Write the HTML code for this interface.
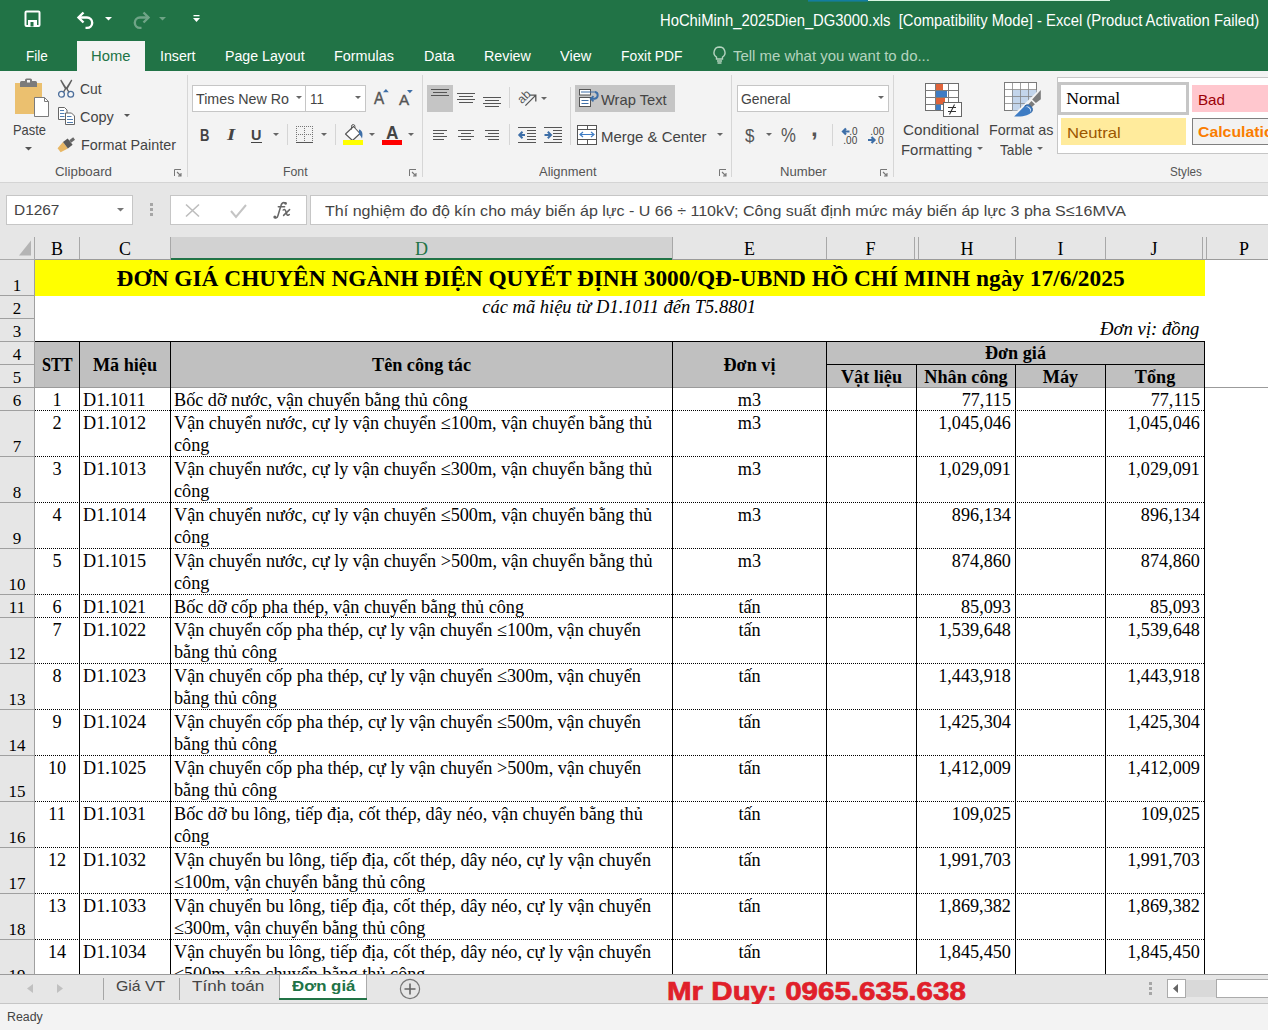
<!DOCTYPE html>
<html><head><meta charset="utf-8">
<style>
*{margin:0;padding:0;box-sizing:border-box}
html,body{width:1268px;height:1030px;overflow:hidden;background:#e6e6e6;position:relative;font-family:"Liberation Sans",sans-serif}
.a{position:absolute;white-space:nowrap}
svg.a{overflow:visible}
</style></head><body>
<div class="a" style="left:0px;top:0px;width:1268px;height:71px;background:#217346"></div>
<div class="a" style="left:808px;top:0px;width:60px;height:1px;background:#137d9f"></div>
<div class="a" style="left:808px;top:1px;width:60px;height:1px;background:#1a7a7a"></div>
<div class="a" style="left:868px;top:0px;width:242px;height:1px;background:#d8f5e2"></div>
<svg class="a" style="left:24px;top:10px" width="18" height="18" viewBox="0 0 18 18"><rect x="1.5" y="1.5" width="14" height="14.5" rx="1" fill="none" stroke="#fff" stroke-width="2"/><rect x="4" y="10" width="9" height="6.5" fill="#fff"/><rect x="6.5" y="12" width="3" height="4.5" fill="#217346"/></svg>
<svg class="a" style="left:76px;top:11px" width="21" height="18" viewBox="0 0 21 18"><path d="M2.5 6.5H11a5.2 5.2 0 0 1 0 10.4H9.5" fill="none" stroke="#fff" stroke-width="2.4"/><path d="M7.5 1.5L2.5 6.5 7.5 11.5" stroke="#fff" stroke-width="2.4" fill="none"/></svg>
<svg class="a" style="left:105px;top:17px" width="8" height="5" viewBox="0 0 8 5"><path d="M0 0h7l-3.5 3.5z" fill="#fff"/></svg>
<svg class="a" style="left:130px;top:11px" width="21" height="18" viewBox="0 0 21 18" opacity="0.35"><path d="M18.5 6.5H10a5.2 5.2 0 0 0 0 10.4h1.5" fill="none" stroke="#fff" stroke-width="2.4"/><path d="M13.5 1.5l5 5-5 5" stroke="#fff" stroke-width="2.4" fill="none"/></svg>
<svg class="a" style="left:159px;top:17px" width="8" height="5" viewBox="0 0 8 5" opacity="0.35"><path d="M0 0h7l-3.5 3.5z" fill="#fff"/></svg>
<svg class="a" style="left:193px;top:15px" width="8" height="8" viewBox="0 0 8 8"><rect x="0.5" y="0" width="6" height="1.3" fill="#fff"/><path d="M0 3h7l-3.5 4z" fill="#fff"/></svg>
<div class="a" style="left:659.70px;top:12.71px;font-size:15.99px;line-height:15.99px;font-family:'Liberation Sans',sans-serif;color:#fff;transform:scaleX(0.9264);transform-origin:0 0">HoChiMinh_2025Dien_DG3000.xls&nbsp; [Compatibility Mode] - Excel (Product Activation Failed)</div>
<div class="a" style="left:77px;top:41px;width:68px;height:31px;background:#f3f3f3"></div>
<div class="a" style="left:25.50px;top:49.02px;font-size:14.68px;line-height:14.68px;font-family:'Liberation Sans',sans-serif;color:#fff;transform:scaleX(0.9224);transform-origin:0 0">File</div>
<div class="a" style="left:90.60px;top:49.02px;font-size:14.68px;line-height:14.68px;font-family:'Liberation Sans',sans-serif;color:#217346;transform:scaleX(1.0078);transform-origin:0 0">Home</div>
<div class="a" style="left:160.40px;top:49.02px;font-size:14.68px;line-height:14.68px;font-family:'Liberation Sans',sans-serif;color:#fff;transform:scaleX(0.9673);transform-origin:0 0">Insert</div>
<div class="a" style="left:225.20px;top:49.02px;font-size:14.68px;line-height:14.68px;font-family:'Liberation Sans',sans-serif;color:#fff;transform:scaleX(0.9672);transform-origin:0 0">Page Layout</div>
<div class="a" style="left:334.00px;top:49.02px;font-size:14.68px;line-height:14.68px;font-family:'Liberation Sans',sans-serif;color:#fff;transform:scaleX(0.9801);transform-origin:0 0">Formulas</div>
<div class="a" style="left:423.50px;top:49.02px;font-size:14.68px;line-height:14.68px;font-family:'Liberation Sans',sans-serif;color:#fff;transform:scaleX(0.9800);transform-origin:0 0">Data</div>
<div class="a" style="left:484.00px;top:49.02px;font-size:14.68px;line-height:14.68px;font-family:'Liberation Sans',sans-serif;color:#fff;transform:scaleX(0.9731);transform-origin:0 0">Review</div>
<div class="a" style="left:560.00px;top:49.02px;font-size:14.68px;line-height:14.68px;font-family:'Liberation Sans',sans-serif;color:#fff;transform:scaleX(0.9934);transform-origin:0 0">View</div>
<div class="a" style="left:621.00px;top:49.02px;font-size:14.68px;line-height:14.68px;font-family:'Liberation Sans',sans-serif;color:#fff;transform:scaleX(0.9435);transform-origin:0 0">Foxit PDF</div>
<div class="a" style="left:733.00px;top:49.02px;font-size:14.68px;line-height:14.68px;font-family:'Liberation Sans',sans-serif;color:#b4d3bf;transform:scaleX(1.0189);transform-origin:0 0">Tell me what you want to do...</div>
<svg class="a" style="left:712px;top:46px" width="15" height="18" viewBox="0 0 15 18"><path d="M7.5 1a5.5 5.5 0 0 0-3 10.1V13h6v-1.9A5.5 5.5 0 0 0 7.5 1z" fill="none" stroke="#b4d3bf" stroke-width="1.4"/><path d="M5 15h5M5.5 17h4" stroke="#b4d3bf" stroke-width="1.3"/></svg>
<div class="a" style="left:0px;top:71px;width:1268px;height:111px;background:#f3f3f3"></div>
<div class="a" style="left:0px;top:182px;width:1268px;height:1px;background:#d4d4d4"></div>
<div class="a" style="left:187px;top:75px;width:1px;height:102px;background:#d6d6d6"></div>
<div class="a" style="left:422px;top:75px;width:1px;height:102px;background:#d6d6d6"></div>
<div class="a" style="left:731px;top:75px;width:1px;height:102px;background:#d6d6d6"></div>
<div class="a" style="left:893px;top:75px;width:1px;height:102px;background:#d6d6d6"></div>
<svg class="a" style="left:13px;top:78px" width="37" height="40" viewBox="0 0 37 40"><rect x="2" y="5" width="27" height="31" fill="#ebc06f"/><path d="M7 9V4.5a1.5 1.5 0 0 1 1.5-1.5H12V2a1.5 1.5 0 0 1 1.5-1.5h4A1.5 1.5 0 0 1 19 2v1h3.5A1.5 1.5 0 0 1 24 4.5V9z" fill="#7b7b7b"/><rect x="14" y="2" width="3" height="2.5" fill="#f3f3f3"/><path d="M21.5 19.5h10l4 4v15h-14z" fill="#fff" stroke="#7b7b7b" stroke-width="1"/><path d="M31.5 19.5v4h4" fill="none" stroke="#7b7b7b" stroke-width="1"/></svg>
<div class="a" style="left:12.70px;top:122.38px;font-size:15.55px;line-height:15.55px;font-family:'Liberation Sans',sans-serif;color:#444;transform:scaleX(0.8289);transform-origin:0 0">Paste</div>
<svg class="a" style="left:25px;top:147px" width="8" height="4" viewBox="0 0 8 4"><path d="M0 0h7l-3.5 3.5z" fill="#555"/></svg>
<svg class="a" style="left:57px;top:79px" width="19" height="19" viewBox="0 0 19 19"><path d="M4.2 0.6L3.2 1.6 8.2 10.6 9.8 9.2z" fill="#5f5f5f"/><path d="M14.3 0.6L15.3 1.6 10.3 10.6 8.7 9.2z" fill="#5f5f5f"/><path d="M9.2 8.6L6.2 13.6M9.2 8.6l3 5" stroke="#5f5f5f" stroke-width="1.3"/><circle cx="4.5" cy="15.3" r="2.9" fill="#fff" fill-opacity="0.4" stroke="#4d6f9c" stroke-width="1.3"/><circle cx="13.7" cy="15.3" r="2.9" fill="#fff" fill-opacity="0.4" stroke="#4d6f9c" stroke-width="1.3"/></svg>
<div class="a" style="left:80.20px;top:81.48px;font-size:15.55px;line-height:15.55px;font-family:'Liberation Sans',sans-serif;color:#444;transform:scaleX(0.8944);transform-origin:0 0">Cut</div>
<svg class="a" style="left:57px;top:106px" width="20" height="20" viewBox="0 0 20 20"><path d="M1.5 1.5h6l2.5 2.5v9.5h-8.5z" fill="#fff" stroke="#666" stroke-width="1"/><path d="M3 4.5h4M3 7.5h4.5M3 10.5h4.5" stroke="#3e6fa8" stroke-width="0.9"/><path d="M8.5 7h6l3 3v8.5h-9z" fill="#fff" stroke="#666" stroke-width="1"/><path d="M10 10.5h4.5M10 13.5h6M10 16.5h6" stroke="#3e6fa8" stroke-width="0.9"/></svg>
<div class="a" style="left:80.20px;top:109.18px;font-size:15.55px;line-height:15.55px;font-family:'Liberation Sans',sans-serif;color:#444;transform:scaleX(0.9300);transform-origin:0 0">Copy</div>
<svg class="a" style="left:124px;top:114px" width="7" height="4" viewBox="0 0 7 4"><path d="M0 0h6l-3 3z" fill="#555"/></svg>
<svg class="a" style="left:57px;top:135px" width="20" height="18" viewBox="0 0 20 18"><g transform="rotate(-38 10 9)"><path d="M0 6.5L8 5v8L0 11.5z" fill="#e8b765"/><rect x="8" y="5" width="6" height="8" fill="#595959"/><rect x="14" y="7.5" width="5" height="3" fill="#6a6a6a"/></g></svg>
<div class="a" style="left:80.80px;top:137.08px;font-size:15.55px;line-height:15.55px;font-family:'Liberation Sans',sans-serif;color:#444;transform:scaleX(0.9231);transform-origin:0 0">Format Painter</div>
<div class="a" style="left:55.40px;top:165.93px;font-size:12.79px;line-height:12.79px;font-family:'Liberation Sans',sans-serif;color:#555;transform:scaleX(1.0412);transform-origin:0 0">Clipboard</div>
<svg class="a" style="left:173.5px;top:169px" width="8" height="8" viewBox="0 0 8 8"><path d="M0.5 7V0.5H7" fill="none" stroke="#777" stroke-width="1"/><path d="M3 3l4 4M7 4v3H4" fill="none" stroke="#777" stroke-width="1.1"/></svg>
<div class="a" style="left:192px;top:85px;width:114px;height:27px;background:#fff;border:1px solid #c6c6c6"></div>
<div class="a" style="left:305px;top:85px;width:61px;height:27px;background:#fff;border:1px solid #c6c6c6"></div>
<div class="a" style="left:196.00px;top:90.98px;font-size:15.55px;line-height:15.55px;font-family:'Liberation Sans',sans-serif;color:#444;transform:scaleX(0.9171);transform-origin:0 0">Times New Ro</div>
<div class="a" style="left:310.30px;top:90.98px;font-size:15.55px;line-height:15.55px;font-family:'Liberation Sans',sans-serif;color:#444;transform:scaleX(0.8532);transform-origin:0 0">11</div>
<svg class="a" style="left:295.5px;top:96px" width="6" height="4" viewBox="0 0 6 4"><path d="M0 0h6l-3.0 3.0 z" fill="#666"/></svg>
<svg class="a" style="left:355px;top:96px" width="6" height="4" viewBox="0 0 6 4"><path d="M0 0h6l-3.0 3.0 z" fill="#666"/></svg>
<div class="a" style="left:374.20px;top:91.33px;font-size:15.84px;line-height:15.84px;font-family:'Liberation Sans',sans-serif;color:#555;transform:scaleX(0.9609);transform-origin:0 0;-webkit-text-stroke:0.4px #555">A</div>
<svg class="a" style="left:382.5px;top:88.5px" width="6" height="4" viewBox="0 0 6 4"><path d="M0 3.2L2.9 0 5.8 3.2z" fill="#3e6fa8"/></svg>
<div class="a" style="left:399.30px;top:92.40px;font-size:15.41px;line-height:15.41px;font-family:'Liberation Sans',sans-serif;color:#555;transform:scaleX(0.9881);transform-origin:0 0;-webkit-text-stroke:0.4px #555">A</div>
<svg class="a" style="left:407px;top:89.5px" width="6" height="4" viewBox="0 0 6 4"><path d="M0 0h5.8L2.9 3.2z" fill="#3e6fa8"/></svg>
<div class="a" style="left:199.80px;top:127.66px;font-size:15.70px;line-height:15.70px;font-family:'Liberation Sans',sans-serif;font-weight:bold;color:#444;transform:scaleX(0.8317);transform-origin:0 0">B</div>
<div class="a" style="left:226.81px;top:127.23px;font-size:16.49px;line-height:16.49px;font-family:'Liberation Serif',serif;font-weight:bold;font-style:italic;color:#444;transform:scaleX(1.2835);transform-origin:0 0">I</div>
<div class="a" style="left:251.30px;top:128.07px;font-size:14.97px;line-height:14.97px;font-family:'Liberation Sans',sans-serif;font-weight:bold;color:#444;transform:scaleX(0.9648);transform-origin:0 0">U</div>
<div class="a" style="left:251px;top:142px;width:11px;height:1px;background:#444"></div>
<svg class="a" style="left:273px;top:133px" width="6" height="4" viewBox="0 0 6 4"><path d="M0 0h6l-3.0 3.0 z" fill="#666"/></svg>
<div class="a" style="left:287px;top:124px;width:1px;height:21px;background:#d5d5d5"></div>
<svg class="a" style="left:296px;top:126px" width="18" height="17" viewBox="0 0 18 17"><path d="M0.5 0v16M16.5 0v16M8.5 0v16M0 0.5h17M0 8.5h17" fill="none" stroke="#777" stroke-width="1" stroke-dasharray="1 1"/><path d="M0 16.5h17" stroke="#555" stroke-width="1"/></svg>
<svg class="a" style="left:321px;top:133px" width="6" height="4" viewBox="0 0 6 4"><path d="M0 0h6l-3.0 3.0 z" fill="#666"/></svg>
<div class="a" style="left:335px;top:124px;width:1px;height:21px;background:#d5d5d5"></div>
<svg class="a" style="left:343px;top:124px" width="21" height="21" viewBox="0 0 21 21"><path d="M2.5 10L10.5 2.5 17 9.5 9.5 16.5z" fill="#fff" stroke="#555" stroke-width="1.1" stroke-linejoin="round"/><path d="M8.5 5.5V2.3a1.7 1.7 0 0 1 3.4 0V4" fill="none" stroke="#555" stroke-width="1"/><path d="M16 5.5c3 0.5 4.3 4 3 9-0.8-1.8-1.8-3.2-3-4.2z" fill="#3e6fa8"/><rect x="0" y="16" width="20" height="5" fill="#ffff00"/></svg>
<svg class="a" style="left:369px;top:133px" width="6" height="4" viewBox="0 0 6 4"><path d="M0 0h6l-3.0 3.0 z" fill="#666"/></svg>
<div class="a" style="left:385.80px;top:123.93px;font-size:18.31px;line-height:18.31px;font-family:'Liberation Sans',sans-serif;font-weight:bold;color:#444;transform:scaleX(0.9404);transform-origin:0 0">A</div>
<div class="a" style="left:382px;top:140px;width:20px;height:5px;background:#ff0000"></div>
<svg class="a" style="left:408px;top:133px" width="6" height="4" viewBox="0 0 6 4"><path d="M0 0h6l-3.0 3.0 z" fill="#666"/></svg>
<div class="a" style="left:283.40px;top:166.13px;font-size:12.79px;line-height:12.79px;font-family:'Liberation Sans',sans-serif;color:#555;transform:scaleX(0.9616);transform-origin:0 0">Font</div>
<svg class="a" style="left:409px;top:169px" width="8" height="8" viewBox="0 0 8 8"><path d="M0.5 7V0.5H7" fill="none" stroke="#777" stroke-width="1"/><path d="M3 3l4 4M7 4v3H4" fill="none" stroke="#777" stroke-width="1.1"/></svg>
<div class="a" style="left:427px;top:85px;width:26px;height:27px;background:#c5c5c5"></div>
<svg class="a" style="left:431px;top:89px" width="30" height="30"><rect x="0" y="0" width="18" height="1" fill="#555"/><rect x="2" y="3" width="14" height="1" fill="#555"/><rect x="0" y="6" width="18" height="1" fill="#555"/></svg>
<svg class="a" style="left:457px;top:93px" width="30" height="30"><rect x="0" y="0" width="18" height="1" fill="#555"/><rect x="2" y="3" width="14" height="1" fill="#555"/><rect x="0" y="6" width="18" height="1" fill="#555"/><rect x="2" y="9" width="14" height="1" fill="#555"/></svg>
<svg class="a" style="left:483px;top:97px" width="30" height="30"><rect x="0" y="0" width="18" height="1" fill="#555"/><rect x="2" y="3" width="14" height="1" fill="#555"/><rect x="0" y="6" width="18" height="1" fill="#555"/><rect x="2" y="9" width="14" height="1" fill="#555"/></svg>
<div class="a" style="left:509px;top:87px;width:1px;height:21px;background:#d5d5d5"></div>
<svg class="a" style="left:516px;top:88px" width="22" height="20" viewBox="0 0 22 20"><text x="1" y="13" font-family="Liberation Sans" font-size="12" fill="#555" transform="rotate(-45 7.5 8.5)">ab</text><path d="M9.4 17.6L19.6 7.4M13.5 7.2h6.3v6.3" fill="none" stroke="#555" stroke-width="1.3"/></svg>
<svg class="a" style="left:541px;top:97px" width="6" height="4" viewBox="0 0 6 4"><path d="M0 0h6l-3.0 3.0 z" fill="#666"/></svg>
<div class="a" style="left:570px;top:87px;width:1px;height:58px;background:#d5d5d5"></div>
<div class="a" style="left:575px;top:85px;width:100px;height:27px;background:#c5c5c5"></div>
<svg class="a" style="left:578px;top:88px" width="21" height="20" viewBox="0 0 21 20"><rect x="1.5" y="1.5" width="11" height="5.5" fill="#fff" stroke="#555"/><rect x="1.5" y="9.5" width="11" height="9" fill="#fff" stroke="#555"/><path d="M3 4H17.5M3.5 12.5h7M3.5 15.5h7" stroke="#3e6fa8" stroke-width="1.1"/><path d="M17 4C20.5 4.3 20.8 10 16.5 10.8H13" fill="none" stroke="#3e6fa8" stroke-width="2"/><path d="M15.5 8.2L12.8 10.8l2.7 2.6" fill="none" stroke="#3e6fa8" stroke-width="1.8"/></svg>
<div class="a" style="left:601.40px;top:91.58px;font-size:15.55px;line-height:15.55px;font-family:'Liberation Sans',sans-serif;color:#444;transform:scaleX(0.9465);transform-origin:0 0">Wrap Text</div>
<svg class="a" style="left:433px;top:130px" width="30" height="30"><rect x="0" y="0" width="14" height="1" fill="#555"/><rect x="0" y="3" width="11" height="1" fill="#555"/><rect x="0" y="6" width="14" height="1" fill="#555"/><rect x="0" y="9" width="11" height="1" fill="#555"/></svg>
<svg class="a" style="left:458px;top:130px" width="30" height="30"><rect x="0" y="0" width="16" height="1" fill="#555"/><rect x="3" y="3" width="10" height="1" fill="#555"/><rect x="0" y="6" width="16" height="1" fill="#555"/><rect x="3" y="9" width="10" height="1" fill="#555"/></svg>
<svg class="a" style="left:485px;top:130px" width="30" height="30"><rect x="0" y="0" width="14" height="1" fill="#555"/><rect x="3" y="3" width="11" height="1" fill="#555"/><rect x="0" y="6" width="14" height="1" fill="#555"/><rect x="3" y="9" width="11" height="1" fill="#555"/></svg>
<div class="a" style="left:509px;top:124px;width:1px;height:21px;background:#d5d5d5"></div>
<svg class="a" style="left:518px;top:126px" width="19" height="17" viewBox="0 0 19 17"><path d="M0 1.5h18M9 4.5h9M9 7.5h9M9 10.5h9M9 13.5h9M0 16.5h18" stroke="#555" stroke-width="1"/><path d="M7 9H1.5M4.5 5.8L1.3 9l3.2 3.2" fill="none" stroke="#3e6fa8" stroke-width="2"/></svg>
<svg class="a" style="left:544px;top:126px" width="19" height="17" viewBox="0 0 19 17"><path d="M0 1.5h18M9 4.5h9M9 7.5h9M9 10.5h9M9 13.5h9M0 16.5h18" stroke="#555" stroke-width="1"/><path d="M0.5 9H6.5M3.8 5.8L7 9l-3.2 3.2" fill="none" stroke="#3e6fa8" stroke-width="2"/></svg>
<svg class="a" style="left:577px;top:125px" width="21" height="20" viewBox="0 0 21 20"><rect x="0.5" y="0.5" width="19" height="19" fill="#fff" stroke="#555"/><path d="M0.5 4.5h19M0.5 14.5h19M10.5 0.5v4M10.5 14.5v4.5" stroke="#555"/><path d="M3 9.5h14M6 7l-3 2.5 3 2.5M14 7l3 2.5-3 2.5" fill="none" stroke="#3e7cc4" stroke-width="1.2"/></svg>
<div class="a" style="left:601.40px;top:128.78px;font-size:15.55px;line-height:15.55px;font-family:'Liberation Sans',sans-serif;color:#444;transform:scaleX(0.9618);transform-origin:0 0">Merge &amp; Center</div>
<svg class="a" style="left:717px;top:133px" width="6" height="4" viewBox="0 0 6 4"><path d="M0 0h6l-3.0 3.0 z" fill="#666"/></svg>
<div class="a" style="left:539.30px;top:165.93px;font-size:12.79px;line-height:12.79px;font-family:'Liberation Sans',sans-serif;color:#555;transform:scaleX(1.0120);transform-origin:0 0">Alignment</div>
<svg class="a" style="left:719px;top:169px" width="8" height="8" viewBox="0 0 8 8"><path d="M0.5 7V0.5H7" fill="none" stroke="#777" stroke-width="1"/><path d="M3 3l4 4M7 4v3H4" fill="none" stroke="#777" stroke-width="1.1"/></svg>
<div class="a" style="left:737px;top:85px;width:152px;height:27px;background:#fff;border:1px solid #c6c6c6"></div>
<div class="a" style="left:740.50px;top:91.38px;font-size:15.55px;line-height:15.55px;font-family:'Liberation Sans',sans-serif;color:#444;transform:scaleX(0.8959);transform-origin:0 0">General</div>
<svg class="a" style="left:878px;top:96px" width="6" height="4" viewBox="0 0 6 4"><path d="M0 0h6l-3.0 3.0 z" fill="#666"/></svg>
<div class="a" style="left:745.00px;top:125.69px;font-size:19.19px;line-height:19.19px;font-family:'Liberation Sans',sans-serif;color:#555;transform:scaleX(0.8842);transform-origin:0 0">$</div>
<svg class="a" style="left:766px;top:133px" width="6" height="4" viewBox="0 0 6 4"><path d="M0 0h6l-3.0 3.0 z" fill="#666"/></svg>
<div class="a" style="left:781.20px;top:125.10px;font-size:20.35px;line-height:20.35px;font-family:'Liberation Sans',sans-serif;color:#555;transform:scaleX(0.8227);transform-origin:0 0">%</div>
<div class="a" style="left:811.00px;top:115.86px;font-size:24.29px;line-height:24.29px;font-family:'Liberation Sans',sans-serif;font-weight:bold;color:#555">,</div>
<div class="a" style="left:832px;top:124px;width:1px;height:22px;background:#d5d5d5"></div>
<svg class="a" style="left:841px;top:127px" width="18" height="18" viewBox="0 0 18 18"><path d="M2 4.5h6.5M5 1.5L2 4.5l3 3" fill="none" stroke="#3e6fa8" stroke-width="2.2"/><text x="8.3" y="8.3" font-family="Liberation Sans" font-size="10" fill="#444">.0</text><text x="2.3" y="17" font-family="Liberation Sans" font-size="10" fill="#444">.00</text></svg>
<svg class="a" style="left:867px;top:127px" width="18" height="18" viewBox="0 0 18 18"><text x="3.3" y="8.3" font-family="Liberation Sans" font-size="10" fill="#444">.00</text><path d="M1 13h6.5M4.5 10l3 3-3 3" fill="none" stroke="#3e6fa8" stroke-width="2.2"/><text x="8.3" y="17" font-family="Liberation Sans" font-size="10" fill="#444">.0</text></svg>
<div class="a" style="left:779.50px;top:166.03px;font-size:12.79px;line-height:12.79px;font-family:'Liberation Sans',sans-serif;color:#555;transform:scaleX(1.0278);transform-origin:0 0">Number</div>
<svg class="a" style="left:880px;top:169px" width="8" height="8" viewBox="0 0 8 8"><path d="M0.5 7V0.5H7" fill="none" stroke="#777" stroke-width="1"/><path d="M3 3l4 4M7 4v3H4" fill="none" stroke="#777" stroke-width="1.1"/></svg>
<svg class="a" style="left:925px;top:83px" width="38" height="35" viewBox="0 0 38 35"><rect x="0.5" y="0.5" width="33" height="27" fill="#fff" stroke="#6e6e6e"/><path d="M10.5 0.5v27M23.5 0.5v27M0.5 7.5h33M0.5 14.5h33M0.5 21.5h33" stroke="#7b7b7b" stroke-width="1"/><rect x="11" y="1" width="7" height="6" fill="#e0633a"/><rect x="11" y="8" width="11" height="6" fill="#3e7cc4"/><rect x="11" y="15" width="9" height="6" fill="#e0633a"/><rect x="11" y="22" width="5" height="5" fill="#3e7cc4"/><rect x="18.5" y="19.5" width="18" height="14" fill="#fff" stroke="#666"/><path d="M23 24.5h8M23 28.5h8M29.5 21.5l-5 10" stroke="#333" stroke-width="1.1"/></svg>
<div class="a" style="left:903.40px;top:122.48px;font-size:15.55px;line-height:15.55px;font-family:'Liberation Sans',sans-serif;color:#444;transform:scaleX(0.9799);transform-origin:0 0">Conditional</div>
<div class="a" style="left:900.70px;top:141.78px;font-size:15.55px;line-height:15.55px;font-family:'Liberation Sans',sans-serif;color:#444;transform:scaleX(0.9591);transform-origin:0 0">Formatting</div>
<svg class="a" style="left:977px;top:147px" width="6" height="4" viewBox="0 0 6 4"><path d="M0 0h6l-3.0 3.0 z" fill="#666"/></svg>
<svg class="a" style="left:1004px;top:82px" width="40" height="36" viewBox="0 0 40 36"><rect x="0.5" y="0.5" width="32" height="28" fill="#fff" stroke="#7b7b7b"/><rect x="8" y="8" width="24.5" height="20.5" fill="#c3d5eb"/><path d="M8.5 0.5v28M16.5 0.5v28M24.5 0.5v28M0.5 7.5h32M0.5 14.5h32M0.5 21.5h32" stroke="#7b7b7b" stroke-width="0.8" opacity="0.9"/><path d="M37 6L37 30L12 30z" fill="#f3f3f3"/><g stroke="#f3f3f3" stroke-width="2.2" stroke-linejoin="round"><path d="M36.8 8v9.2l-4.9 3.7-3.7-3.3z"/><path d="M27.4 19l3.5 3.3-3.5 3.3-3.2-3.1z"/><path d="M10.1 34.6L20.5 24.2a4.6 4.6 0 0 1 6.5 6.5C24 33.8 17 34.8 10.1 34.6z"/></g><path d="M36.8 8v9.2l-4.9 3.7-3.7-3.3z" fill="#7b7b7b"/><path d="M27.4 19l3.5 3.3-3.5 3.3-3.2-3.1z" fill="#7b7b7b"/><path d="M10.1 34.6L20.5 24.2a4.6 4.6 0 0 1 6.5 6.5C24 33.8 17 34.8 10.1 34.6z" fill="#3e7cc4"/><path d="M21.2 25.2a3.6 3.6 0 0 1 5 5 4 4 0 0 0-5-5z" fill="#fff"/><path d="M20.5 24.2a4.6 4.6 0 0 1 6.5 6.5" fill="none" stroke="#2f5f97" stroke-width="0.9"/></svg>
<div class="a" style="left:988.50px;top:122.48px;font-size:15.55px;line-height:15.55px;font-family:'Liberation Sans',sans-serif;color:#444;transform:scaleX(0.9202);transform-origin:0 0">Format as</div>
<div class="a" style="left:999.70px;top:141.78px;font-size:15.55px;line-height:15.55px;font-family:'Liberation Sans',sans-serif;color:#444;transform:scaleX(0.8797);transform-origin:0 0">Table</div>
<svg class="a" style="left:1037px;top:147px" width="6" height="4" viewBox="0 0 6 4"><path d="M0 0h6l-3.0 3.0 z" fill="#666"/></svg>
<div class="a" style="left:1057px;top:77px;width:211px;height:77px;background:#fff;border:1px solid #c6c6c6;border-right:none"></div>
<div class="a" style="left:1058px;top:82px;width:131px;height:33px;background:#fff;border:3px solid #c6c6c6"></div>
<div class="a" style="left:1066.30px;top:89.57px;font-size:17.64px;line-height:17.64px;font-family:'Liberation Serif',serif;color:#000">Normal</div>
<div class="a" style="left:1192px;top:85px;width:76px;height:27px;background:#ffc7ce"></div>
<div class="a" style="left:1197.50px;top:91.58px;font-size:15.55px;line-height:15.55px;font-family:'Liberation Sans',sans-serif;color:#9c0006;transform:scaleX(0.9753);transform-origin:0 0">Bad</div>
<div class="a" style="left:1061px;top:118px;width:125px;height:27px;background:#ffeb9c"></div>
<div class="a" style="left:1066.80px;top:124.78px;font-size:15.55px;line-height:15.55px;font-family:'Liberation Sans',sans-serif;color:#9c5700;transform:scaleX(1.0723);transform-origin:0 0">Neutral</div>
<div class="a" style="left:1192px;top:118px;width:76px;height:27px;background:#f2f2f2;border:1px solid #7f7f7f;border-right:none"></div>
<div class="a" style="left:1197.80px;top:124.40px;font-size:15.41px;line-height:15.41px;font-family:'Liberation Sans',sans-serif;font-weight:bold;color:#fa7d00;transform:scaleX(1.0260);transform-origin:0 0">Calculation</div>
<div class="a" style="left:1169.50px;top:165.83px;font-size:12.79px;line-height:12.79px;font-family:'Liberation Sans',sans-serif;color:#555;transform:scaleX(0.9140);transform-origin:0 0">Styles</div>
<div class="a" style="left:0px;top:183px;width:1268px;height:54px;background:#e6e6e6"></div>
<div class="a" style="left:6px;top:195px;width:127px;height:30px;background:#fff;border:1px solid #c6c6c6"></div>
<div class="a" style="left:13.50px;top:203.07px;font-size:14.97px;line-height:14.97px;font-family:'Liberation Sans',sans-serif;color:#444;transform:scaleX(1.0302);transform-origin:0 0">D1267</div>
<svg class="a" style="left:117px;top:208px" width="7" height="4" viewBox="0 0 7 4"><path d="M0 0h7l-3.5 3.5 z" fill="#777"/></svg>
<div class="a" style="left:150px;top:203px;width:3px;height:3px;background:#a6a6a6"></div>
<div class="a" style="left:150px;top:208px;width:3px;height:3px;background:#a6a6a6"></div>
<div class="a" style="left:150px;top:213px;width:3px;height:3px;background:#a6a6a6"></div>
<div class="a" style="left:170px;top:195px;width:137px;height:30px;background:#fff;border:1px solid #c6c6c6"></div>
<svg class="a" style="left:185px;top:204px" width="15" height="13" viewBox="0 0 15 13"><path d="M1 0.5l13 12M14 0.5l-13 12" stroke="#bdbdbd" stroke-width="1.6"/></svg>
<svg class="a" style="left:230px;top:204px" width="17" height="14" viewBox="0 0 17 14"><path d="M1 7l5 6L16 1" fill="none" stroke="#c4c4c4" stroke-width="2"/></svg>
<svg class="a" style="left:272px;top:198px" width="20" height="24" viewBox="0 0 20 24"><g fill="none" stroke="#666" stroke-width="1.5" stroke-linecap="round"><path d="M2.5 19C3.5 20.5 5.2 20.3 6 17.5L8.8 8C9.6 5 11.2 4 13.3 5"/><path d="M6.3 8.8H12.6"/><path d="M11.2 12C12.4 11.2 13.3 11.6 13.8 13.2L14.8 16.2C15.3 17.6 16.4 17.6 17.3 16.6"/><path d="M17.6 11.6L11.6 17.4"/></g><circle cx="2.9" cy="18.9" r="1.5" fill="#666"/><circle cx="13.6" cy="5.4" r="1.3" fill="#666"/></svg>
<div class="a" style="left:310px;top:195px;width:958px;height:30px;background:#fff;border:1px solid #c6c6c6;border-right:none"></div>
<div class="a" style="left:325.40px;top:202.95px;font-size:15.12px;line-height:15.12px;font-family:'Liberation Sans',sans-serif;color:#444;transform:scaleX(1.0614);transform-origin:0 0">Thí nghiệm đo độ kín cho máy biến áp lực - U 66 ÷ 110kV; Công suất định mức máy biến áp lực 3 pha S≤16MVA</div>
<div class="a" style="left:0px;top:237px;width:1268px;height:23px;background:#e6e6e6"></div>
<div class="a" style="left:171px;top:237px;width:501px;height:21px;background:#d2d2d2"></div>
<div class="a" style="left:171px;top:258px;width:501px;height:2px;background:#217346"></div>
<div class="a" style="left:0px;top:259px;width:171px;height:1px;background:#9b9b9b"></div>
<div class="a" style="left:672px;top:259px;width:596px;height:1px;background:#9b9b9b"></div>
<div class="a" style="left:0px;top:259px;width:35px;height:1px;background:#ababab"></div>
<svg class="a" style="left:19px;top:240px" width="13" height="16" viewBox="0 0 13 16"><path d="M12 0.5V15.5H0z" fill="#b4b4b4"/></svg>
<div class="a" style="left:34px;top:237px;width:1px;height:22px;background:#a8a8a8"></div>
<div class="a" style="left:79px;top:237px;width:1px;height:22px;background:#a8a8a8"></div>
<div class="a" style="left:170px;top:237px;width:1px;height:22px;background:#a8a8a8"></div>
<div class="a" style="left:672px;top:237px;width:1px;height:22px;background:#a8a8a8"></div>
<div class="a" style="left:826px;top:237px;width:1px;height:22px;background:#a8a8a8"></div>
<div class="a" style="left:914px;top:237px;width:1px;height:22px;background:#a8a8a8"></div>
<div class="a" style="left:918px;top:237px;width:1px;height:22px;background:#a8a8a8"></div>
<div class="a" style="left:1015px;top:237px;width:1px;height:22px;background:#a8a8a8"></div>
<div class="a" style="left:1105px;top:237px;width:1px;height:22px;background:#a8a8a8"></div>
<div class="a" style="left:1202px;top:237px;width:1px;height:22px;background:#a8a8a8"></div>
<div class="a" style="left:1206px;top:237px;width:1px;height:22px;background:#a8a8a8"></div>
<div class="a" style="left:35px;top:237px;width:44px;height:22px;text-align:center;font-family:'Liberation Serif',serif;font-size:18px;line-height:25px;color:#000">B</div>
<div class="a" style="left:80px;top:237px;width:90px;height:22px;text-align:center;font-family:'Liberation Serif',serif;font-size:18px;line-height:25px;color:#000">C</div>
<div class="a" style="left:171px;top:237px;width:501px;height:22px;text-align:center;font-family:'Liberation Serif',serif;font-size:18px;line-height:25px;color:#217346">D</div>
<div class="a" style="left:673px;top:237px;width:153px;height:22px;text-align:center;font-family:'Liberation Serif',serif;font-size:18px;line-height:25px;color:#000">E</div>
<div class="a" style="left:827px;top:237px;width:87px;height:22px;text-align:center;font-family:'Liberation Serif',serif;font-size:18px;line-height:25px;color:#000">F</div>
<div class="a" style="left:919px;top:237px;width:96px;height:22px;text-align:center;font-family:'Liberation Serif',serif;font-size:18px;line-height:25px;color:#000">H</div>
<div class="a" style="left:1016px;top:237px;width:89px;height:22px;text-align:center;font-family:'Liberation Serif',serif;font-size:18px;line-height:25px;color:#000">I</div>
<div class="a" style="left:1106px;top:237px;width:96px;height:22px;text-align:center;font-family:'Liberation Serif',serif;font-size:18px;line-height:25px;color:#000">J</div>
<div class="a" style="left:1207px;top:237px;width:74px;height:22px;text-align:center;font-family:'Liberation Serif',serif;font-size:18px;line-height:25px;color:#000">P</div>
<div class="a" style="left:35px;top:260px;width:1233px;height:714px;background:#fff"></div>
<div class="a" style="left:0px;top:260px;width:34px;height:714px;background:#e6e6e6"></div>
<div class="a" style="left:34px;top:260px;width:1px;height:714px;background:#a0a0a0"></div>
<div class="a" style="left:0px;top:295px;width:34px;height:1px;background:#a0a0a0"></div>
<div class="a" style="left:0;top:260px;width:34px;height:35px;overflow:hidden"><div class="a" style="left:0;width:34px;top:16.8px;text-align:center;font-family:'Liberation Serif',serif;font-size:17px;line-height:17px;color:#000">1</div></div>
<div class="a" style="left:0px;top:318px;width:34px;height:1px;background:#a0a0a0"></div>
<div class="a" style="left:0;top:296px;width:34px;height:22px;overflow:hidden"><div class="a" style="left:0;width:34px;top:3.8px;text-align:center;font-family:'Liberation Serif',serif;font-size:17px;line-height:17px;color:#000">2</div></div>
<div class="a" style="left:0px;top:341px;width:34px;height:1px;background:#a0a0a0"></div>
<div class="a" style="left:0;top:319px;width:34px;height:22px;overflow:hidden"><div class="a" style="left:0;width:34px;top:3.8px;text-align:center;font-family:'Liberation Serif',serif;font-size:17px;line-height:17px;color:#000">3</div></div>
<div class="a" style="left:0px;top:364px;width:34px;height:1px;background:#a0a0a0"></div>
<div class="a" style="left:0;top:342px;width:34px;height:22px;overflow:hidden"><div class="a" style="left:0;width:34px;top:3.8px;text-align:center;font-family:'Liberation Serif',serif;font-size:17px;line-height:17px;color:#000">4</div></div>
<div class="a" style="left:0px;top:387px;width:34px;height:1px;background:#a0a0a0"></div>
<div class="a" style="left:0;top:365px;width:34px;height:22px;overflow:hidden"><div class="a" style="left:0;width:34px;top:3.8px;text-align:center;font-family:'Liberation Serif',serif;font-size:17px;line-height:17px;color:#000">5</div></div>
<div class="a" style="left:0px;top:410px;width:34px;height:1px;background:#a0a0a0"></div>
<div class="a" style="left:0;top:388px;width:34px;height:22px;overflow:hidden"><div class="a" style="left:0;width:34px;top:3.8px;text-align:center;font-family:'Liberation Serif',serif;font-size:17px;line-height:17px;color:#000">6</div></div>
<div class="a" style="left:0px;top:456px;width:34px;height:1px;background:#a0a0a0"></div>
<div class="a" style="left:0;top:411px;width:34px;height:45px;overflow:hidden"><div class="a" style="left:0;width:34px;top:26.8px;text-align:center;font-family:'Liberation Serif',serif;font-size:17px;line-height:17px;color:#000">7</div></div>
<div class="a" style="left:0px;top:502px;width:34px;height:1px;background:#a0a0a0"></div>
<div class="a" style="left:0;top:457px;width:34px;height:45px;overflow:hidden"><div class="a" style="left:0;width:34px;top:26.8px;text-align:center;font-family:'Liberation Serif',serif;font-size:17px;line-height:17px;color:#000">8</div></div>
<div class="a" style="left:0px;top:548px;width:34px;height:1px;background:#a0a0a0"></div>
<div class="a" style="left:0;top:503px;width:34px;height:45px;overflow:hidden"><div class="a" style="left:0;width:34px;top:26.8px;text-align:center;font-family:'Liberation Serif',serif;font-size:17px;line-height:17px;color:#000">9</div></div>
<div class="a" style="left:0px;top:594px;width:34px;height:1px;background:#a0a0a0"></div>
<div class="a" style="left:0;top:549px;width:34px;height:45px;overflow:hidden"><div class="a" style="left:0;width:34px;top:26.8px;text-align:center;font-family:'Liberation Serif',serif;font-size:17px;line-height:17px;color:#000">10</div></div>
<div class="a" style="left:0px;top:617px;width:34px;height:1px;background:#a0a0a0"></div>
<div class="a" style="left:0;top:595px;width:34px;height:22px;overflow:hidden"><div class="a" style="left:0;width:34px;top:3.8px;text-align:center;font-family:'Liberation Serif',serif;font-size:17px;line-height:17px;color:#000">11</div></div>
<div class="a" style="left:0px;top:663px;width:34px;height:1px;background:#a0a0a0"></div>
<div class="a" style="left:0;top:618px;width:34px;height:45px;overflow:hidden"><div class="a" style="left:0;width:34px;top:26.8px;text-align:center;font-family:'Liberation Serif',serif;font-size:17px;line-height:17px;color:#000">12</div></div>
<div class="a" style="left:0px;top:709px;width:34px;height:1px;background:#a0a0a0"></div>
<div class="a" style="left:0;top:664px;width:34px;height:45px;overflow:hidden"><div class="a" style="left:0;width:34px;top:26.8px;text-align:center;font-family:'Liberation Serif',serif;font-size:17px;line-height:17px;color:#000">13</div></div>
<div class="a" style="left:0px;top:755px;width:34px;height:1px;background:#a0a0a0"></div>
<div class="a" style="left:0;top:710px;width:34px;height:45px;overflow:hidden"><div class="a" style="left:0;width:34px;top:26.8px;text-align:center;font-family:'Liberation Serif',serif;font-size:17px;line-height:17px;color:#000">14</div></div>
<div class="a" style="left:0px;top:801px;width:34px;height:1px;background:#a0a0a0"></div>
<div class="a" style="left:0;top:756px;width:34px;height:45px;overflow:hidden"><div class="a" style="left:0;width:34px;top:26.8px;text-align:center;font-family:'Liberation Serif',serif;font-size:17px;line-height:17px;color:#000">15</div></div>
<div class="a" style="left:0px;top:847px;width:34px;height:1px;background:#a0a0a0"></div>
<div class="a" style="left:0;top:802px;width:34px;height:45px;overflow:hidden"><div class="a" style="left:0;width:34px;top:26.8px;text-align:center;font-family:'Liberation Serif',serif;font-size:17px;line-height:17px;color:#000">16</div></div>
<div class="a" style="left:0px;top:893px;width:34px;height:1px;background:#a0a0a0"></div>
<div class="a" style="left:0;top:848px;width:34px;height:45px;overflow:hidden"><div class="a" style="left:0;width:34px;top:26.8px;text-align:center;font-family:'Liberation Serif',serif;font-size:17px;line-height:17px;color:#000">17</div></div>
<div class="a" style="left:0px;top:939px;width:34px;height:1px;background:#a0a0a0"></div>
<div class="a" style="left:0;top:894px;width:34px;height:45px;overflow:hidden"><div class="a" style="left:0;width:34px;top:26.8px;text-align:center;font-family:'Liberation Serif',serif;font-size:17px;line-height:17px;color:#000">18</div></div>
<div class="a" style="left:0;top:940px;width:34px;height:34px;overflow:hidden"><div class="a" style="left:0;width:34px;top:26.8px;text-align:center;font-family:'Liberation Serif',serif;font-size:17px;line-height:17px;color:#000">19</div></div>
<div class="a" style="left:35px;top:260px;width:1170px;height:36px;background:#ffff00"></div>
<div class="a" style="left:116.60px;top:267.29px;font-size:23.37px;line-height:23.37px;font-family:'Liberation Serif',serif;font-weight:bold;color:#000">ĐƠN GIÁ CHUYÊN NGÀNH ĐIỆN QUYẾT ĐỊNH 3000/QĐ-UBND HỒ CHÍ MINH ngày 17/6/2025</div>
<div class="a" style="left:482.30px;top:298.06px;font-size:18.49px;line-height:18.49px;font-family:'Liberation Serif',serif;font-style:italic;color:#000">các mã hiệu từ D1.1011 đến T5.8801</div>
<div class="a" style="left:1100.07px;top:320.37px;font-size:18.72px;line-height:18.72px;font-family:'Liberation Serif',serif;font-style:italic;color:#000">Đơn vị: đồng</div>
<div class="a" style="left:35px;top:342px;width:1170px;height:45px;background:#c0c0c0"></div>
<div class="a" style="left:35px;top:341px;width:1170px;height:1px;background:#000"></div>
<div class="a" style="left:826px;top:364px;width:379px;height:1px;background:#000"></div>
<div class="a" style="left:0px;top:387px;width:1268px;height:1px;background:#9b9b9b"></div>
<div class="a" style="left:79px;top:341px;width:1px;height:633px;background:#000"></div>
<div class="a" style="left:170px;top:341px;width:1px;height:633px;background:#000"></div>
<div class="a" style="left:672px;top:341px;width:1px;height:633px;background:#000"></div>
<div class="a" style="left:826px;top:341px;width:1px;height:633px;background:#000"></div>
<div class="a" style="left:916px;top:364px;width:1px;height:610px;background:#000"></div>
<div class="a" style="left:1015px;top:364px;width:1px;height:610px;background:#000"></div>
<div class="a" style="left:1105px;top:364px;width:1px;height:610px;background:#000"></div>
<div class="a" style="left:1204px;top:341px;width:1px;height:633px;background:#000"></div>
<div class="a" style="left:41.80px;top:356.20px;font-size:18.32px;line-height:18.32px;font-family:'Liberation Serif',serif;font-weight:bold;color:#000;transform:scaleX(0.8866);transform-origin:0 0">STT</div>
<div class="a" style="left:92.88px;top:356.30px;font-size:18.20px;line-height:18.20px;font-family:'Liberation Serif',serif;font-weight:bold;color:#000">Mã hiệu</div>
<div class="a" style="left:372.00px;top:356.30px;font-size:18.20px;line-height:18.20px;font-family:'Liberation Serif',serif;font-weight:bold;color:#000">Tên công tác</div>
<div class="a" style="left:723.47px;top:356.30px;font-size:18.20px;line-height:18.20px;font-family:'Liberation Serif',serif;font-weight:bold;color:#000">Đơn vị</div>
<div class="a" style="left:984.92px;top:343.70px;font-size:18.20px;line-height:18.20px;font-family:'Liberation Serif',serif;font-weight:bold;color:#000">Đơn giá</div>
<div class="a" style="left:840.92px;top:367.70px;font-size:18.20px;line-height:18.20px;font-family:'Liberation Serif',serif;font-weight:bold;color:#000">Vật liệu</div>
<div class="a" style="left:924.32px;top:367.70px;font-size:18.20px;line-height:18.20px;font-family:'Liberation Serif',serif;font-weight:bold;color:#000">Nhân công</div>
<div class="a" style="left:1042.85px;top:367.70px;font-size:18.20px;line-height:18.20px;font-family:'Liberation Serif',serif;font-weight:bold;color:#000">Máy</div>
<div class="a" style="left:1134.80px;top:367.70px;font-size:18.20px;line-height:18.20px;font-family:'Liberation Serif',serif;font-weight:bold;color:#000">Tổng</div>
<div class="a" style="left:0;top:0;width:1268px;height:974px;overflow:hidden">
<div class="a" style="left:52.45px;top:391.30px;font-size:18.20px;line-height:18.20px;font-family:'Liberation Serif',serif;color:#000">1</div>
<div class="a" style="left:83.00px;top:391.30px;font-size:18.20px;line-height:18.20px;font-family:'Liberation Serif',serif;color:#000">D1.1011</div>
<div class="a" style="left:174.00px;top:391.30px;font-size:18.20px;line-height:18.20px;font-family:'Liberation Serif',serif;color:#000">Bốc dỡ nước, vận chuyển bằng thủ công</div>
<div class="a" style="left:737.85px;top:391.30px;font-size:18.20px;line-height:18.20px;font-family:'Liberation Serif',serif;color:#000">m3</div>
<div class="a" style="left:961.68px;top:391.30px;font-size:18.20px;line-height:18.20px;font-family:'Liberation Serif',serif;color:#000">77,115</div>
<div class="a" style="left:1150.68px;top:391.30px;font-size:18.20px;line-height:18.20px;font-family:'Liberation Serif',serif;color:#000">77,115</div>
<div class="a" style="left:35px;top:410px;width:1169px;height:1px;background:repeating-linear-gradient(90deg,#000 0 1px,transparent 1px 2px)"></div>
<div class="a" style="left:52.45px;top:414.30px;font-size:18.20px;line-height:18.20px;font-family:'Liberation Serif',serif;color:#000">2</div>
<div class="a" style="left:83.00px;top:414.30px;font-size:18.20px;line-height:18.20px;font-family:'Liberation Serif',serif;color:#000">D1.1012</div>
<div class="a" style="left:174.00px;top:414.30px;font-size:18.20px;line-height:18.20px;font-family:'Liberation Serif',serif;color:#000">Vận chuyển nước, cự ly vận chuyển ≤100m, vận chuyển bằng thủ</div>
<div class="a" style="left:174.00px;top:436.30px;font-size:18.20px;line-height:18.20px;font-family:'Liberation Serif',serif;color:#000">công</div>
<div class="a" style="left:737.85px;top:414.30px;font-size:18.20px;line-height:18.20px;font-family:'Liberation Serif',serif;color:#000">m3</div>
<div class="a" style="left:938.20px;top:414.30px;font-size:18.20px;line-height:18.20px;font-family:'Liberation Serif',serif;color:#000">1,045,046</div>
<div class="a" style="left:1127.20px;top:414.30px;font-size:18.20px;line-height:18.20px;font-family:'Liberation Serif',serif;color:#000">1,045,046</div>
<div class="a" style="left:35px;top:456px;width:1169px;height:1px;background:repeating-linear-gradient(90deg,#000 0 1px,transparent 1px 2px)"></div>
<div class="a" style="left:52.45px;top:460.30px;font-size:18.20px;line-height:18.20px;font-family:'Liberation Serif',serif;color:#000">3</div>
<div class="a" style="left:83.00px;top:460.30px;font-size:18.20px;line-height:18.20px;font-family:'Liberation Serif',serif;color:#000">D1.1013</div>
<div class="a" style="left:174.00px;top:460.30px;font-size:18.20px;line-height:18.20px;font-family:'Liberation Serif',serif;color:#000">Vận chuyển nước, cự ly vận chuyển ≤300m, vận chuyển bằng thủ</div>
<div class="a" style="left:174.00px;top:482.30px;font-size:18.20px;line-height:18.20px;font-family:'Liberation Serif',serif;color:#000">công</div>
<div class="a" style="left:737.85px;top:460.30px;font-size:18.20px;line-height:18.20px;font-family:'Liberation Serif',serif;color:#000">m3</div>
<div class="a" style="left:938.20px;top:460.30px;font-size:18.20px;line-height:18.20px;font-family:'Liberation Serif',serif;color:#000">1,029,091</div>
<div class="a" style="left:1127.20px;top:460.30px;font-size:18.20px;line-height:18.20px;font-family:'Liberation Serif',serif;color:#000">1,029,091</div>
<div class="a" style="left:35px;top:502px;width:1169px;height:1px;background:repeating-linear-gradient(90deg,#000 0 1px,transparent 1px 2px)"></div>
<div class="a" style="left:52.45px;top:506.30px;font-size:18.20px;line-height:18.20px;font-family:'Liberation Serif',serif;color:#000">4</div>
<div class="a" style="left:83.00px;top:506.30px;font-size:18.20px;line-height:18.20px;font-family:'Liberation Serif',serif;color:#000">D1.1014</div>
<div class="a" style="left:174.00px;top:506.30px;font-size:18.20px;line-height:18.20px;font-family:'Liberation Serif',serif;color:#000">Vận chuyển nước, cự ly vận chuyển ≤500m, vận chuyển bằng thủ</div>
<div class="a" style="left:174.00px;top:528.30px;font-size:18.20px;line-height:18.20px;font-family:'Liberation Serif',serif;color:#000">công</div>
<div class="a" style="left:737.85px;top:506.30px;font-size:18.20px;line-height:18.20px;font-family:'Liberation Serif',serif;color:#000">m3</div>
<div class="a" style="left:951.85px;top:506.30px;font-size:18.20px;line-height:18.20px;font-family:'Liberation Serif',serif;color:#000">896,134</div>
<div class="a" style="left:1140.85px;top:506.30px;font-size:18.20px;line-height:18.20px;font-family:'Liberation Serif',serif;color:#000">896,134</div>
<div class="a" style="left:35px;top:548px;width:1169px;height:1px;background:repeating-linear-gradient(90deg,#000 0 1px,transparent 1px 2px)"></div>
<div class="a" style="left:52.45px;top:552.30px;font-size:18.20px;line-height:18.20px;font-family:'Liberation Serif',serif;color:#000">5</div>
<div class="a" style="left:83.00px;top:552.30px;font-size:18.20px;line-height:18.20px;font-family:'Liberation Serif',serif;color:#000">D1.1015</div>
<div class="a" style="left:174.00px;top:552.30px;font-size:18.20px;line-height:18.20px;font-family:'Liberation Serif',serif;color:#000">Vận chuyển nước, cự ly vận chuyển >500m, vận chuyển bằng thủ</div>
<div class="a" style="left:174.00px;top:574.30px;font-size:18.20px;line-height:18.20px;font-family:'Liberation Serif',serif;color:#000">công</div>
<div class="a" style="left:737.85px;top:552.30px;font-size:18.20px;line-height:18.20px;font-family:'Liberation Serif',serif;color:#000">m3</div>
<div class="a" style="left:951.85px;top:552.30px;font-size:18.20px;line-height:18.20px;font-family:'Liberation Serif',serif;color:#000">874,860</div>
<div class="a" style="left:1140.85px;top:552.30px;font-size:18.20px;line-height:18.20px;font-family:'Liberation Serif',serif;color:#000">874,860</div>
<div class="a" style="left:35px;top:594px;width:1169px;height:1px;background:repeating-linear-gradient(90deg,#000 0 1px,transparent 1px 2px)"></div>
<div class="a" style="left:52.45px;top:598.30px;font-size:18.20px;line-height:18.20px;font-family:'Liberation Serif',serif;color:#000">6</div>
<div class="a" style="left:83.00px;top:598.30px;font-size:18.20px;line-height:18.20px;font-family:'Liberation Serif',serif;color:#000">D1.1021</div>
<div class="a" style="left:174.00px;top:598.30px;font-size:18.20px;line-height:18.20px;font-family:'Liberation Serif',serif;color:#000">Bốc dỡ cốp pha thép, vận chuyển bằng thủ công</div>
<div class="a" style="left:738.40px;top:598.30px;font-size:18.20px;line-height:18.20px;font-family:'Liberation Serif',serif;color:#000">tấn</div>
<div class="a" style="left:960.95px;top:598.30px;font-size:18.20px;line-height:18.20px;font-family:'Liberation Serif',serif;color:#000">85,093</div>
<div class="a" style="left:1149.95px;top:598.30px;font-size:18.20px;line-height:18.20px;font-family:'Liberation Serif',serif;color:#000">85,093</div>
<div class="a" style="left:35px;top:617px;width:1169px;height:1px;background:repeating-linear-gradient(90deg,#000 0 1px,transparent 1px 2px)"></div>
<div class="a" style="left:52.45px;top:621.30px;font-size:18.20px;line-height:18.20px;font-family:'Liberation Serif',serif;color:#000">7</div>
<div class="a" style="left:83.00px;top:621.30px;font-size:18.20px;line-height:18.20px;font-family:'Liberation Serif',serif;color:#000">D1.1022</div>
<div class="a" style="left:174.00px;top:621.30px;font-size:18.20px;line-height:18.20px;font-family:'Liberation Serif',serif;color:#000">Vận chuyển cốp pha thép, cự ly vận chuyển ≤100m, vận chuyển</div>
<div class="a" style="left:174.00px;top:643.30px;font-size:18.20px;line-height:18.20px;font-family:'Liberation Serif',serif;color:#000">bằng thủ công</div>
<div class="a" style="left:738.40px;top:621.30px;font-size:18.20px;line-height:18.20px;font-family:'Liberation Serif',serif;color:#000">tấn</div>
<div class="a" style="left:938.20px;top:621.30px;font-size:18.20px;line-height:18.20px;font-family:'Liberation Serif',serif;color:#000">1,539,648</div>
<div class="a" style="left:1127.20px;top:621.30px;font-size:18.20px;line-height:18.20px;font-family:'Liberation Serif',serif;color:#000">1,539,648</div>
<div class="a" style="left:35px;top:663px;width:1169px;height:1px;background:repeating-linear-gradient(90deg,#000 0 1px,transparent 1px 2px)"></div>
<div class="a" style="left:52.45px;top:667.30px;font-size:18.20px;line-height:18.20px;font-family:'Liberation Serif',serif;color:#000">8</div>
<div class="a" style="left:83.00px;top:667.30px;font-size:18.20px;line-height:18.20px;font-family:'Liberation Serif',serif;color:#000">D1.1023</div>
<div class="a" style="left:174.00px;top:667.30px;font-size:18.20px;line-height:18.20px;font-family:'Liberation Serif',serif;color:#000">Vận chuyển cốp pha thép, cự ly vận chuyển ≤300m, vận chuyển</div>
<div class="a" style="left:174.00px;top:689.30px;font-size:18.20px;line-height:18.20px;font-family:'Liberation Serif',serif;color:#000">bằng thủ công</div>
<div class="a" style="left:738.40px;top:667.30px;font-size:18.20px;line-height:18.20px;font-family:'Liberation Serif',serif;color:#000">tấn</div>
<div class="a" style="left:938.20px;top:667.30px;font-size:18.20px;line-height:18.20px;font-family:'Liberation Serif',serif;color:#000">1,443,918</div>
<div class="a" style="left:1127.20px;top:667.30px;font-size:18.20px;line-height:18.20px;font-family:'Liberation Serif',serif;color:#000">1,443,918</div>
<div class="a" style="left:35px;top:709px;width:1169px;height:1px;background:repeating-linear-gradient(90deg,#000 0 1px,transparent 1px 2px)"></div>
<div class="a" style="left:52.45px;top:713.30px;font-size:18.20px;line-height:18.20px;font-family:'Liberation Serif',serif;color:#000">9</div>
<div class="a" style="left:83.00px;top:713.30px;font-size:18.20px;line-height:18.20px;font-family:'Liberation Serif',serif;color:#000">D1.1024</div>
<div class="a" style="left:174.00px;top:713.30px;font-size:18.20px;line-height:18.20px;font-family:'Liberation Serif',serif;color:#000">Vận chuyển cốp pha thép, cự ly vận chuyển ≤500m, vận chuyển</div>
<div class="a" style="left:174.00px;top:735.30px;font-size:18.20px;line-height:18.20px;font-family:'Liberation Serif',serif;color:#000">bằng thủ công</div>
<div class="a" style="left:738.40px;top:713.30px;font-size:18.20px;line-height:18.20px;font-family:'Liberation Serif',serif;color:#000">tấn</div>
<div class="a" style="left:938.20px;top:713.30px;font-size:18.20px;line-height:18.20px;font-family:'Liberation Serif',serif;color:#000">1,425,304</div>
<div class="a" style="left:1127.20px;top:713.30px;font-size:18.20px;line-height:18.20px;font-family:'Liberation Serif',serif;color:#000">1,425,304</div>
<div class="a" style="left:35px;top:755px;width:1169px;height:1px;background:repeating-linear-gradient(90deg,#000 0 1px,transparent 1px 2px)"></div>
<div class="a" style="left:47.90px;top:759.30px;font-size:18.20px;line-height:18.20px;font-family:'Liberation Serif',serif;color:#000">10</div>
<div class="a" style="left:83.00px;top:759.30px;font-size:18.20px;line-height:18.20px;font-family:'Liberation Serif',serif;color:#000">D1.1025</div>
<div class="a" style="left:174.00px;top:759.30px;font-size:18.20px;line-height:18.20px;font-family:'Liberation Serif',serif;color:#000">Vận chuyển cốp pha thép, cự ly vận chuyển >500m, vận chuyển</div>
<div class="a" style="left:174.00px;top:781.30px;font-size:18.20px;line-height:18.20px;font-family:'Liberation Serif',serif;color:#000">bằng thủ công</div>
<div class="a" style="left:738.40px;top:759.30px;font-size:18.20px;line-height:18.20px;font-family:'Liberation Serif',serif;color:#000">tấn</div>
<div class="a" style="left:938.20px;top:759.30px;font-size:18.20px;line-height:18.20px;font-family:'Liberation Serif',serif;color:#000">1,412,009</div>
<div class="a" style="left:1127.20px;top:759.30px;font-size:18.20px;line-height:18.20px;font-family:'Liberation Serif',serif;color:#000">1,412,009</div>
<div class="a" style="left:35px;top:801px;width:1169px;height:1px;background:repeating-linear-gradient(90deg,#000 0 1px,transparent 1px 2px)"></div>
<div class="a" style="left:48.26px;top:805.30px;font-size:18.20px;line-height:18.20px;font-family:'Liberation Serif',serif;color:#000">11</div>
<div class="a" style="left:83.00px;top:805.30px;font-size:18.20px;line-height:18.20px;font-family:'Liberation Serif',serif;color:#000">D1.1031</div>
<div class="a" style="left:174.00px;top:805.30px;font-size:18.20px;line-height:18.20px;font-family:'Liberation Serif',serif;color:#000">Bốc dỡ bu lông, tiếp địa, cốt thép, dây néo, vận chuyển bằng thủ</div>
<div class="a" style="left:174.00px;top:827.30px;font-size:18.20px;line-height:18.20px;font-family:'Liberation Serif',serif;color:#000">công</div>
<div class="a" style="left:738.40px;top:805.30px;font-size:18.20px;line-height:18.20px;font-family:'Liberation Serif',serif;color:#000">tấn</div>
<div class="a" style="left:951.85px;top:805.30px;font-size:18.20px;line-height:18.20px;font-family:'Liberation Serif',serif;color:#000">109,025</div>
<div class="a" style="left:1140.85px;top:805.30px;font-size:18.20px;line-height:18.20px;font-family:'Liberation Serif',serif;color:#000">109,025</div>
<div class="a" style="left:35px;top:847px;width:1169px;height:1px;background:repeating-linear-gradient(90deg,#000 0 1px,transparent 1px 2px)"></div>
<div class="a" style="left:47.90px;top:851.30px;font-size:18.20px;line-height:18.20px;font-family:'Liberation Serif',serif;color:#000">12</div>
<div class="a" style="left:83.00px;top:851.30px;font-size:18.20px;line-height:18.20px;font-family:'Liberation Serif',serif;color:#000">D1.1032</div>
<div class="a" style="left:174.00px;top:851.30px;font-size:18.20px;line-height:18.20px;font-family:'Liberation Serif',serif;color:#000">Vận chuyển bu lông, tiếp địa, cốt thép, dây néo, cự ly vận chuyển</div>
<div class="a" style="left:174.00px;top:873.30px;font-size:18.20px;line-height:18.20px;font-family:'Liberation Serif',serif;color:#000">≤100m, vận chuyển bằng thủ công</div>
<div class="a" style="left:738.40px;top:851.30px;font-size:18.20px;line-height:18.20px;font-family:'Liberation Serif',serif;color:#000">tấn</div>
<div class="a" style="left:938.20px;top:851.30px;font-size:18.20px;line-height:18.20px;font-family:'Liberation Serif',serif;color:#000">1,991,703</div>
<div class="a" style="left:1127.20px;top:851.30px;font-size:18.20px;line-height:18.20px;font-family:'Liberation Serif',serif;color:#000">1,991,703</div>
<div class="a" style="left:35px;top:893px;width:1169px;height:1px;background:repeating-linear-gradient(90deg,#000 0 1px,transparent 1px 2px)"></div>
<div class="a" style="left:47.90px;top:897.30px;font-size:18.20px;line-height:18.20px;font-family:'Liberation Serif',serif;color:#000">13</div>
<div class="a" style="left:83.00px;top:897.30px;font-size:18.20px;line-height:18.20px;font-family:'Liberation Serif',serif;color:#000">D1.1033</div>
<div class="a" style="left:174.00px;top:897.30px;font-size:18.20px;line-height:18.20px;font-family:'Liberation Serif',serif;color:#000">Vận chuyển bu lông, tiếp địa, cốt thép, dây néo, cự ly vận chuyển</div>
<div class="a" style="left:174.00px;top:919.30px;font-size:18.20px;line-height:18.20px;font-family:'Liberation Serif',serif;color:#000">≤300m, vận chuyển bằng thủ công</div>
<div class="a" style="left:738.40px;top:897.30px;font-size:18.20px;line-height:18.20px;font-family:'Liberation Serif',serif;color:#000">tấn</div>
<div class="a" style="left:938.20px;top:897.30px;font-size:18.20px;line-height:18.20px;font-family:'Liberation Serif',serif;color:#000">1,869,382</div>
<div class="a" style="left:1127.20px;top:897.30px;font-size:18.20px;line-height:18.20px;font-family:'Liberation Serif',serif;color:#000">1,869,382</div>
<div class="a" style="left:35px;top:939px;width:1169px;height:1px;background:repeating-linear-gradient(90deg,#000 0 1px,transparent 1px 2px)"></div>
<div class="a" style="left:47.90px;top:943.30px;font-size:18.20px;line-height:18.20px;font-family:'Liberation Serif',serif;color:#000">14</div>
<div class="a" style="left:83.00px;top:943.30px;font-size:18.20px;line-height:18.20px;font-family:'Liberation Serif',serif;color:#000">D1.1034</div>
<div class="a" style="left:174.00px;top:943.30px;font-size:18.20px;line-height:18.20px;font-family:'Liberation Serif',serif;color:#000">Vận chuyển bu lông, tiếp địa, cốt thép, dây néo, cự ly vận chuyển</div>
<div class="a" style="left:174.00px;top:965.30px;font-size:18.20px;line-height:18.20px;font-family:'Liberation Serif',serif;color:#000">≤500m, vận chuyển bằng thủ công</div>
<div class="a" style="left:738.40px;top:943.30px;font-size:18.20px;line-height:18.20px;font-family:'Liberation Serif',serif;color:#000">tấn</div>
<div class="a" style="left:938.20px;top:943.30px;font-size:18.20px;line-height:18.20px;font-family:'Liberation Serif',serif;color:#000">1,845,450</div>
<div class="a" style="left:1127.20px;top:943.30px;font-size:18.20px;line-height:18.20px;font-family:'Liberation Serif',serif;color:#000">1,845,450</div>
</div>
<div class="a" style="left:0px;top:974px;width:1268px;height:1px;background:#9b9b9b"></div>
<div class="a" style="left:0px;top:975px;width:1268px;height:28px;background:#e6e6e6"></div>
<div class="a" style="left:0px;top:1003px;width:1268px;height:1px;background:#c6c6c6"></div>
<svg class="a" style="left:27px;top:984px" width="7" height="10" viewBox="0 0 7 10"><path d="M6 0v9L0 4.5z" fill="#c0c0c0"/></svg>
<svg class="a" style="left:57px;top:984px" width="7" height="10" viewBox="0 0 7 10"><path d="M0 0v9l6-4.5z" fill="#c0c0c0"/></svg>
<div class="a" style="left:103px;top:978px;width:1px;height:22px;background:#a6a6a6"></div>
<div class="a" style="left:116.20px;top:977.78px;font-size:15.55px;line-height:15.55px;font-family:'Liberation Sans',sans-serif;color:#444;transform:scaleX(1.0172);transform-origin:0 0">Giá VT</div>
<div class="a" style="left:179px;top:978px;width:1px;height:22px;background:#a6a6a6"></div>
<div class="a" style="left:192.00px;top:977.78px;font-size:15.55px;line-height:15.55px;font-family:'Liberation Sans',sans-serif;color:#444;transform:scaleX(1.1001);transform-origin:0 0">Tính toán</div>
<div class="a" style="left:279px;top:975px;width:88px;height:25px;background:#fff;border-left:1px solid #ababab;border-right:1px solid #ababab"></div>
<div class="a" style="left:279px;top:998px;width:88px;height:2px;background:#217346"></div>
<div class="a" style="left:291.50px;top:977.78px;font-size:15.55px;line-height:15.55px;font-family:'Liberation Sans',sans-serif;font-weight:bold;color:#217346;transform:scaleX(1.0830);transform-origin:0 0">Đơn giá</div>
<svg class="a" style="left:399px;top:978px" width="22" height="22" viewBox="0 0 22 22"><circle cx="11" cy="11" r="9.6" fill="none" stroke="#777" stroke-width="1.2"/><path d="M11 5.5v11M5.5 11h11" stroke="#666" stroke-width="1.6"/></svg>
<div class="a" style="left:667.40px;top:978.26px;font-size:26.16px;line-height:26.16px;font-family:'Liberation Sans',sans-serif;font-weight:bold;color:#e0202a;transform:scaleX(1.1293);transform-origin:0 0;-webkit-text-stroke:0.7px #e0202a">Mr Duy: 0965.635.638</div>
<div class="a" style="left:1149px;top:982px;width:3px;height:3px;background:#a6a6a6"></div>
<div class="a" style="left:1149px;top:987px;width:3px;height:3px;background:#a6a6a6"></div>
<div class="a" style="left:1149px;top:992px;width:3px;height:3px;background:#a6a6a6"></div>
<div class="a" style="left:1167px;top:979px;width:19px;height:19px;background:#fff;border:1px solid #ababab"></div>
<svg class="a" style="left:1173px;top:984px" width="6" height="10" viewBox="0 0 6 10"><path d="M5 0v9L0 4.5z" fill="#666"/></svg>
<div class="a" style="left:1186px;top:980px;width:30px;height:17px;background:#d9d9d9"></div>
<div class="a" style="left:1216px;top:979px;width:52px;height:19px;background:#fff;border:1px solid #ababab;border-right:none"></div>
<div class="a" style="left:0px;top:1004px;width:1268px;height:26px;background:#f3f3f3"></div>
<div class="a" style="left:7.40px;top:1010.38px;font-size:13.08px;line-height:13.08px;font-family:'Liberation Sans',sans-serif;color:#444;transform:scaleX(0.9443);transform-origin:0 0">Ready</div>
</body></html>
